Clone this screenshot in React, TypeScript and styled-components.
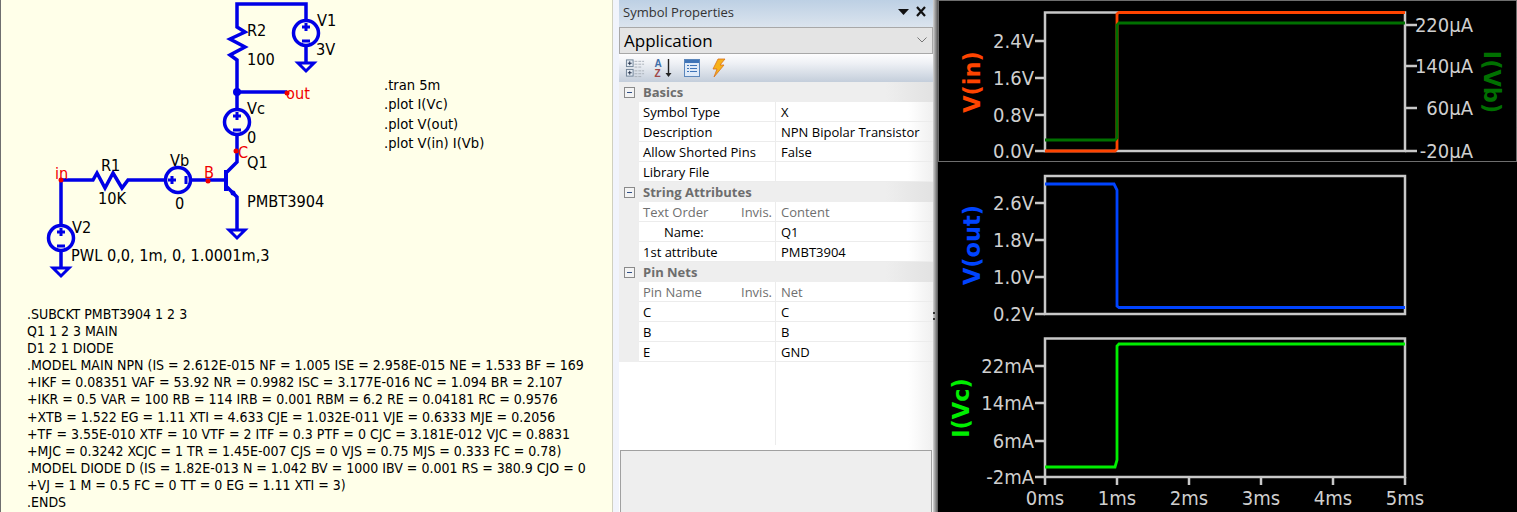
import React from 'react'
import styled, { createGlobalStyle } from 'styled-components'

const GlobalStyle = createGlobalStyle`
  html, body { margin: 0; padding: 0; background: #000; }
  body { width: 1517px; height: 512px; overflow: hidden; font-family: "DejaVu Sans Condensed", "DejaVu Sans", sans-serif; }
`

const Page = styled.div`
  display: flex;
  width: 1517px;
  height: 512px;
`

/* schematic side */
const SchematicPane = styled.section`
  width: 613px;
  height: 512px;
  flex: none;
  background: #ffffe9;
  border-left: 1px solid #6f6f6f;
  border-right: 1px solid #d0d0c0;
  box-sizing: border-box;
  overflow: hidden;
`

const SchematicSvg = styled.svg`
  display: block;
  font-family: "DejaVu Sans Condensed", "DejaVu Sans", sans-serif;
  font-size: 16.2px;
  fill: #000;
`

const Directive = styled.text`
  font-size: 14.6px;
`

const Netlist = styled.pre`
  margin: 18px 0 0 26px;
  font-family: "DejaVu Sans Condensed", "DejaVu Sans", sans-serif;
  font-size: 14px;
  line-height: 17.100px;
  color: #000;
`

/* properties side */
const Sash = styled.div`
  width: 6px;
  flex: none;
  background: #f1f4fc;
`

const PropsPane = styled.section`
  width: 314px;
  flex: none;
  display: flex;
  flex-direction: column;
  background: linear-gradient(90deg, #fff 92%, #f0f0f0);
  font-family: "Open Sans", "Noto Sans", sans-serif;
  font-size: 13px;
  color: #000;
`

const TitleBar = styled.header`
  height: 27px;
  box-sizing: border-box;
  display: flex;
  align-items: center;
  justify-content: space-between;
  padding: 0 5px 3px 4px;
  background: linear-gradient(#bdd0e4, #dbe4ee);
  color: #333;
  font-size: 13px;
`

const Combo = styled.div`
  height: 27px;
  box-sizing: border-box;
  display: flex;
  align-items: center;
  justify-content: space-between;
  padding: 0 5px 1px 4px;
  background: #e4e4e4;
  border: 1px solid #a8a8a8;
  font-size: 17px;
`

const Toolbar = styled.div`
  height: 28px;
  display: flex;
  align-items: center;
  gap: 9px;
  padding: 0 0 0 6px;
  background: linear-gradient(#fdfdfe, #f0f2f6 30%, #c4cedb);
`

const PropGrid = styled.div`
  display: flex;
  flex-direction: column;
`

const SectionRow = styled.div`
  height: 20px;
  display: flex;
  align-items: center;
  gap: 8px;
  padding-left: 5px;
  background: linear-gradient(90deg, #eeeeee 85%, #e2e2e2);
  color: #6d6d6d;
  font-weight: 700;
  font-size: 13px;
`

const Collapse = styled.span`
  width: 9px;
  height: 9px;
  border: 1px solid #8a8a8a;
  background: #f3f3f3;
  position: relative;
  flex: none;
  &::after {
    content: "";
    position: absolute;
    left: 2px;
    right: 2px;
    top: 4px;
    height: 1px;
    background: #2f4f86;
  }
`

const Row = styled.div`
  height: 20px;
  display: grid;
  grid-template-columns: 20px 137px 1fr;
`

const Gutter = styled.div`
  background: #eeeeee;
`

const NameCell = styled.div<{ $head?: boolean; $indent?: boolean }>`
  box-sizing: border-box;
  display: flex;
  align-items: center;
  justify-content: space-between;
  padding: 1px 3px 0 ${(p) => (p.$indent ? 25 : 4)}px;
  border-right: 1px solid #ececec;
  border-bottom: 1px solid #ececec;
  white-space: nowrap;
  color: ${(p) => (p.$head ? '#6f6f6f' : '#000')};
`

const ValueCell = styled.div<{ $head?: boolean }>`
  box-sizing: border-box;
  display: flex;
  align-items: center;
  padding: 1px 0 0 5px;
  border-bottom: 1px solid #ececec;
  white-space: nowrap;
  color: ${(p) => (p.$head ? '#6f6f6f' : '#000')};
`

const EmptyGrid = styled.div`
  height: 83px;
  display: grid;
  grid-template-columns: 157px 1fr;
`

const EmptyLeft = styled.div`
  border-right: 1px solid #ececec;
`

const HelpBox = styled.div`
  flex: 1;
  margin: 5px 1px 0 1px;
  background: #eeeeee;
  border: 1px solid #a0a0a0;
  border-bottom: none;
`

const Divider = styled.div`
  width: 5px;
  flex: none;
  position: relative;
  background: linear-gradient(90deg, #d4d4d4, #8e8e8e 55%, #555);
  &::after {
    content: "";
    position: absolute;
    left: 0;
    top: 312px;
    width: 2px;
    height: 8px;
    border-top: 2px solid #333;
    border-bottom: 2px solid #333;
    box-sizing: border-box;
  }
`

/* plot side */
const PlotPane = styled.section`
  flex: 1;
  background: #000;
  overflow: hidden;
`

const PlotSvg = styled.svg`
  display: block;
  font-family: "DejaVu Sans Condensed", "DejaVu Sans", sans-serif;
  font-size: 20px;
  fill: #cfcfcf;
`

type Cell = { name: string; value: string; invis?: string; head?: boolean; indent?: boolean }
type Section = { title: string; rows: Cell[] }

const sections: Section[] = [
  {
    title: 'Basics',
    rows: [
      { name: 'Symbol Type', value: 'X' },
      { name: 'Description', value: 'NPN Bipolar Transistor' },
      { name: 'Allow Shorted Pins', value: 'False' },
      { name: 'Library File', value: '' },
    ],
  },
  {
    title: 'String Attributes',
    rows: [
      { name: 'Text Order', invis: 'Invis.', value: 'Content', head: true },
      { name: 'Name:', value: 'Q1', indent: true },
      { name: '1st attribute', value: 'PMBT3904' },
    ],
  },
  {
    title: 'Pin Nets',
    rows: [
      { name: 'Pin Name', invis: 'Invis.', value: 'Net', head: true },
      { name: 'C', value: 'C' },
      { name: 'B', value: 'B' },
      { name: 'E', value: 'GND' },
    ],
  },
]

const netlist = `.SUBCKT PMBT3904 1 2 3
Q1 1 2 3 MAIN
D1 2 1 DIODE
.MODEL MAIN NPN (IS = 2.612E-015 NF = 1.005 ISE = 2.958E-015 NE = 1.533 BF = 169
+IKF = 0.08351 VAF = 53.92 NR = 0.9982 ISC = 3.177E-016 NC = 1.094 BR = 2.107
+IKR = 0.5 VAR = 100 RB = 114 IRB = 0.001 RBM = 6.2 RE = 0.04181 RC = 0.9576
+XTB = 1.522 EG = 1.11 XTI = 4.633 CJE = 1.032E-011 VJE = 0.6333 MJE = 0.2056
+TF = 3.55E-010 XTF = 10 VTF = 2 ITF = 0.3 PTF = 0 CJC = 3.181E-012 VJC = 0.8831
+MJC = 0.3242 XCJC = 1 TR = 1.45E-007 CJS = 0 VJS = 0.75 MJS = 0.333 FC = 0.78)
.MODEL DIODE D (IS = 1.82E-013 N = 1.042 BV = 1000 IBV = 0.001 RS = 380.9 CJO = 0
+VJ = 1 M = 0.5 FC = 0 TT = 0 EG = 1.11 XTI = 3)
.ENDS`

const WIRE = '#0000e6'
const NET = '#f00000'

const Source = ({ x, y, flat }: { x: number; y: number; flat?: boolean }) => (
  <g stroke={WIRE} strokeWidth={3.5} fill="none">
    <circle cx={x} cy={y} r={12.5} />
    {flat ? (
      <path d={`M${x - 10} ${y}h8M${x - 6} ${y - 4}v8M${x + 8} ${y - 4}v8`} strokeWidth={3} />
    ) : (
      <path d={`M${x} ${y - 10}v8M${x - 4} ${y - 6}h8M${x - 4} ${y + 8}h8`} strokeWidth={3} />
    )}
  </g>
)

const Ground = ({ x, y }: { x: number; y: number }) => (
  <path d={`M${x - 8} ${y}h16l-8 8z`} stroke={WIRE} strokeWidth={3} fill="none" />
)

const Schematic = () => (
  <SchematicSvg width={611} height={288} viewBox="1 0 611 288">
    <g stroke={WIRE} strokeWidth={3.5} fill="none">
      <path d="M306 20V4H237V27L245 32L230 39L245 47L230 55L237 60V109" />
      <path d="M237 92H287" />
      <path d="M237 135V162L227 172" />
      <path d="M227 187L237 197V230" />
      <path d="M306 46V63" />
      <path d="M61 225V180H93L97 173L105 188L113 173L122 188L128 180H165" />
      <path d="M191 180H226" />
      <path d="M61 251V268" />
      <path d="M226 170V191" strokeWidth={4} />
    </g>
    <circle cx={237} cy={92} r={4} fill={WIRE} />
    <circle cx={233} cy={193} r={2.5} fill={WIRE} />
    <Source x={306} y={33} />
    <Source x={237} y={122} />
    <Source x={61} y={238} />
    <Source x={178} y={180} flat />
    <Ground x={306} y={63} />
    <Ground x={237} y={230} />
    <Ground x={61} y={268} />
    <g fill={NET}>
      <circle cx={287} cy={93} r={2.5} />
      <circle cx={236} cy={151} r={2.5} />
      <circle cx={208} cy={181} r={2.5} />
      <circle cx={61} cy={180} r={2.5} />
      <text x={286} y={99}>out</text>
      <text x={238} y={158}>C</text>
      <text x={204} y={178}>B</text>
      <text x={55} y={179}>in</text>
    </g>
    <text x={247} y={36}>R2</text>
    <text x={247} y={65}>100</text>
    <text x={317} y={26}>V1</text>
    <text x={316} y={55}>3V</text>
    <text x={247} y={114}>Vc</text>
    <text x={247} y={143}>0</text>
    <text x={247} y={168}>Q1</text>
    <text x={247} y={207}>PMBT3904</text>
    <text x={170} y={166}>Vb</text>
    <text x={175} y={209}>0</text>
    <text x={101} y={171}>R1</text>
    <text x={98} y={204}>10K</text>
    <text x={72} y={233}>V2</text>
    <text x={71} y={261}>PWL 0,0, 1m, 0, 1.0001m,3</text>
    <Directive x={384} y={90}>.tran 5m</Directive>
    <Directive x={384} y={109}>.plot I(Vc)</Directive>
    <Directive x={384} y={129}>.plot V(out)</Directive>
    <Directive x={384} y={148}>.plot V(in) I(Vb)</Directive>
  </SchematicSvg>
)

const CategoryIcon = () => (
  <svg width={20} height={20} viewBox="0 0 21 20">
    <g fill="#e6edf5" stroke="#6f8296">
      <rect x="1.5" y="1.5" width="7" height="7" />
      <rect x="1.500" y="11.500" width="7" height="7" />
    </g>
    <path d="M3 5h4M5 3v4M3 15h4M5 13v4" stroke="#1c2a44" />
    <path d="M10 3h10M10 6h10M10 9h8M10 13h10M10 16h10M10 19h8" stroke="#a9b0b8" strokeDasharray="3 1" />
  </svg>
)

const SortIcon = () => (
  <svg width={21} height={20} viewBox="0 0 20 20">
    <text x="0" y="9" fontSize="10" fontWeight="700" fontFamily="Liberation Sans" fill="#3f6ea8">A</text>
    <text x="0" y="19" fontSize="10" fontWeight="700" fontFamily="Liberation Sans" fill="#a04848">Z</text>
    <path d="M14 1v15" stroke="#222" strokeWidth="1.4" />
    <path d="M11 15h6l-3 4z" fill="#222" />
  </svg>
)

const PageIcon = () => (
  <svg width={16} height={18} viewBox="0 0 16 18">
    <rect x=".5" y=".5" width="15" height="17" fill="#dfeaf8" stroke="#5b86bb" />
    <rect x="1" y="1" width="14" height="3" fill="#3f74b8" />
    <path d="M3 6.500h2M6 6.500h7M3 9.500h2M6 9.500h7M3 12.500h2M6 12.500h7" stroke="#3f74b8" />
  </svg>
)

const BoltIcon = () => (
  <svg width={17} height={20} viewBox="-3 0 17 20">
    <path d="M6 1h7L8 7h4L2 19l3-8H1z" fill="#f6b21a" stroke="#d9701a" strokeWidth=".8" />
  </svg>
)

const Pin = () => (
  <svg width={30} height={12} viewBox="0 0 30 12">
    <path d="M0 3h11l-5.500 6z" fill="#111" />
    <path d="M19 1l8 9M27 1l-8 9" stroke="#111" strokeWidth="2.2" />
  </svg>
)

const Chevron = () => (
  <svg width={10} height={6} viewBox="0 0 10 6">
    <path d="M.5 .5L5 5l4.500-4.500" fill="none" stroke="#777" />
  </svg>
)

const Properties = () => (
  <PropsPane>
    <TitleBar>
      Symbol Properties
      <Pin />
    </TitleBar>
    <Combo>
      Application
      <Chevron />
    </Combo>
    <Toolbar>
      <CategoryIcon />
      <SortIcon />
      <PageIcon />
      <BoltIcon />
    </Toolbar>
    <PropGrid>
      {sections.map((s) => (
        <React.Fragment key={s.title}>
          <SectionRow>
            <Collapse />
            {s.title}
          </SectionRow>
          {s.rows.map((r) => (
            <Row key={r.name}>
              <Gutter />
              <NameCell $head={r.head} $indent={r.indent}>
                <span>{r.name}</span>
                {r.invis && <span>{r.invis}</span>}
              </NameCell>
              <ValueCell $head={r.head}>{r.value}</ValueCell>
            </Row>
          ))}
        </React.Fragment>
      ))}
    </PropGrid>
    <EmptyGrid>
      <EmptyLeft />
    </EmptyGrid>
    <HelpBox />
  </PropsPane>
)

const FRAME = '#c8c8c8'
const L = 107
const R = 467

type Tick = { y: number; label: string }

const Frame = ({ top, bottom }: { top: number; bottom: number }) => (
  <rect x={L} y={top} width={R - L} height={bottom - top} fill="none" stroke={FRAME} strokeWidth={2.5} />
)

const LeftTicks = ({ ticks }: { ticks: Tick[] }) => (
  <>
    {ticks.map((t) => (
      <g key={t.label}>
        <path d={`M${L - 10} ${t.y}H${L}`} stroke={FRAME} strokeWidth={2.5} />
        <text x={L - 11} y={t.y + 7} textAnchor="end">{t.label}</text>
      </g>
    ))}
  </>
)

const Trace = ({ d, color }: { d: string; color: string }) => (
  <path d={d} fill="none" stroke={color} strokeWidth={2.8} />
)

const AxisLabel = ({ x, y, color, flip, children }: { x: number; y: number; color: string; flip?: boolean; children: string }) => (
  <text
    transform={`translate(${x} ${y}) rotate(${flip ? 90 : -90})`}
    fill={color}
    fontFamily="DejaVu Sans"
    fontWeight={700}
    fontSize={22.5}
    textAnchor="middle"
  >
    {children}
  </text>
)

const rightTicks: Tick[] = [
  { y: 25, label: '220µA' },
  { y: 66, label: '140µA' },
  { y: 108, label: '60µA' },
  { y: 151, label: '-20µA' },
]

const xLabels = ['0ms', '1ms', '2ms', '3ms', '4ms', '5ms']

const Plots = () => (
  <PlotPane>
    <PlotSvg width={579} height={512} viewBox="0 0 579 512">
      <rect x=".5" y=".5" width="578" height="161" fill="none" stroke="#ddd" strokeDasharray="1 1" />

      <Frame top={12.5} bottom={151} />
      <LeftTicks ticks={[
        { y: 41, label: '2.4V' },
        { y: 78, label: '1.6V' },
        { y: 115, label: '0.8V' },
        { y: 151, label: '0.0V' },
      ]} />
      {rightTicks.map((t) => (
        <g key={t.label}>
          <path d={`M${R} ${t.y}h12`} stroke={FRAME} strokeWidth={2.5} />
          <text x={R + 68} y={t.y + 7} textAnchor="end">{t.label}</text>
        </g>
      ))}
      <Trace color="#ff4400" d="M107 151H177L179 149V14L181 12.500H467" />
      <Trace color="#007000" d="M107 140H177L179 138V25L181 23H467" />
      <AxisLabel x={42} y={82} color="#ff4400">V(in)</AxisLabel>
      <AxisLabel x={546} y={82} color="#007000" flip>I(Vb)</AxisLabel>

      <Frame top={176} bottom={314} />
      <LeftTicks ticks={[
        { y: 203, label: '2.6V' },
        { y: 240, label: '1.8V' },
        { y: 277, label: '1.0V' },
        { y: 314, label: '0.2V' },
      ]} />
      <Trace color="#0044ff" d="M107 184H176L179 190V306L181 307.500H467" />
      <AxisLabel x={42} y={245} color="#0044ff">V(out)</AxisLabel>

      <Frame top={338.5} bottom={477} />
      <LeftTicks ticks={[
        { y: 366, label: '22mA' },
        { y: 403, label: '14mA' },
        { y: 441, label: '6mA' },
        { y: 477, label: '-2mA' },
      ]} />
      <Trace color="#00ee00" d="M107 467H177L179 460V346L181 344H467" />
      <AxisLabel x={31} y={408} color="#00ee00">I(Vc)</AxisLabel>

      {xLabels.map((label, i) => (
        <g key={label}>
          <path d={`M${L + i * 72} 477v8`} stroke={FRAME} strokeWidth={2.5} />
          <text x={L + i * 72} y={505} textAnchor="middle">{label}</text>
        </g>
      ))}
    </PlotSvg>
  </PlotPane>
)

export default function App() {
  return (
    <Page>
      <GlobalStyle />
      <SchematicPane>
        <Schematic />
        <Netlist>{netlist}</Netlist>
      </SchematicPane>
      <Sash />
      <Properties />
      <Divider />
      <Plots />
    </Page>
  )
}
